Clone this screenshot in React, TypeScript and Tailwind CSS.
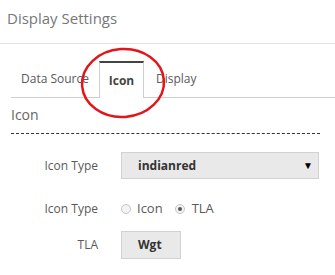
import React from 'react';

function Radio({ checked }: { checked?: boolean }) {
  return (
    <span className="flex h-[10px] w-[10px] items-center justify-center rounded-full border border-[#c4c4c4] bg-[#f3f3f3]">
      {checked && <span className="h-[4px] w-[4px] rounded-full bg-[#555]" />}
    </span>
  );
}

export default function App() {
  return (
    <div className="relative h-[275px] w-[335px] overflow-hidden bg-white font-['Open_Sans',sans-serif] text-[#5a5a5a]">
      {/* Header */}
      <div className="h-[44px] border-b border-[#e2e2e2] pl-[7px] pt-[8px] text-[15px] leading-[20px] text-[#777]">
        Display Settings
      </div>

      {/* Tabs */}
      <div className="ml-[11px] mt-[17px] flex items-end border-b border-[#cfcfcf] text-[12px]">
        <div className="flex h-[36px] w-[88px] items-center pl-[10px]">Data Source</div>
        <div className="-mb-px flex h-[37px] w-[45px] items-center justify-center border-x border-t-2 border-x-[#cfcfcf] border-t-[#444] bg-white font-bold text-[#444]">
          Icon
        </div>
        <div className="flex h-[36px] items-center pl-[12px]">Display</div>
      </div>

      {/* Section heading */}
      <div className="ml-[11px] mr-[15px] mt-[7px] border-b border-dashed border-[#333] pb-[8px] text-[14px] leading-[20px] text-[#666]">
        Icon
      </div>

      {/* Form */}
      <div className="mt-[18px] flex flex-col text-[12px]">
        <div className="flex items-center">
          <div className="w-[98px] text-right">Icon Type</div>
          <div className="ml-[23px] flex h-[27px] w-[198px] items-center justify-between border border-[#d2d2d2] bg-[#e9e9e9] pl-[16px] pr-[5px] font-bold text-[#333]">
            <span>indianred</span>
            <span className="text-[10px] text-black">▼</span>
          </div>
        </div>

        <div className="mt-[20px] flex h-[20px] items-center">
          <div className="w-[98px] text-right">Icon Type</div>
          <div className="ml-[23px] flex items-center text-[13px]">
            <Radio />
            <span className="ml-[6px]">Icon</span>
            <span className="ml-[12px]"><Radio checked /></span>
            <span className="ml-[7px]">TLA</span>
          </div>
        </div>

        <div className="mt-[12px] flex items-center">
          <div className="w-[98px] text-right">TLA</div>
          <div className="ml-[23px] flex h-[28px] w-[60px] items-center border border-[#d2d2d2] bg-[#e9e9e9] pl-[16px] font-bold text-[#333]">
            Wgt
          </div>
        </div>
      </div>

      {/* Red annotation circle */}
      <svg className="pointer-events-none absolute left-[79px] top-[46px]" width="90" height="75" viewBox="0 0 90 75">
        <ellipse cx="44" cy="37" rx="41" ry="34" fill="none" stroke="#e4141b" strokeWidth="2.5" transform="rotate(-4 44 37)" />
      </svg>
    </div>
  );
}
